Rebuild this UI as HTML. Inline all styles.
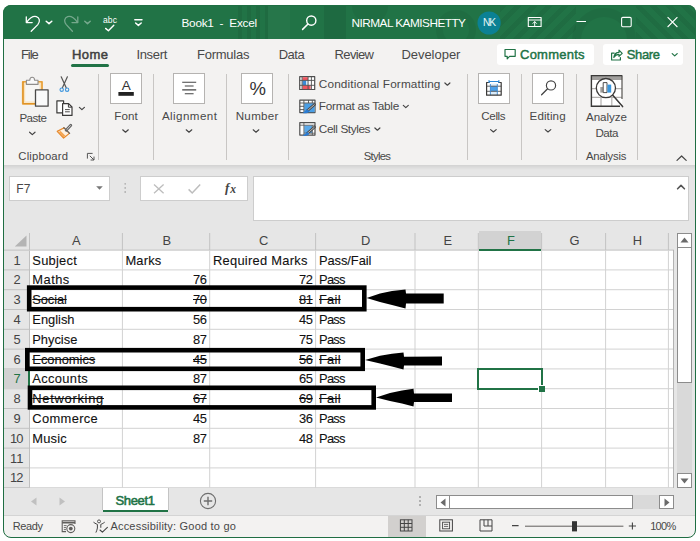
<!DOCTYPE html>
<html lang="en"><head><meta charset="utf-8"><title>Book1 - Excel</title>
<style>
html,body{margin:0;padding:0;background:#fff;}
body{width:700px;height:541px;overflow:hidden;position:relative;font-family:"Liberation Sans",sans-serif;}
#win{position:absolute;left:3px;top:5px;width:693px;height:533px;overflow:hidden;border-radius:8px;background:#f3f2f1;}
#pg{position:absolute;left:-3px;top:-5px;width:700px;height:541px;}
#frame{position:absolute;left:3px;top:5px;width:691px;height:531px;border:1px solid #1f6e43;border-radius:8px;pointer-events:none;}
.a{position:absolute;}
.t{position:absolute;white-space:pre;line-height:1;}
.sep{position:absolute;width:1px;background:#c8c6c4;top:74px;height:86px;}
.bx{position:absolute;background:#fff;border:1px solid #b5b3b1;box-sizing:border-box;}
.gl{position:absolute;background:#d4d4d4;}
svg{position:absolute;overflow:visible;}

</style></head><body>
<div id="win"><div id="pg">
<!-- title bar -->
<div class="a" style="left:3px;top:5px;width:693px;height:34px;background:#217346;"></div>
<!-- title bar subtle pattern -->
<div class="a" style="left:238px;top:5px;width:30px;height:34px;background:repeating-linear-gradient(90deg,rgba(0,0,0,0.07) 0 4px,rgba(0,0,0,0) 4px 9px);"></div>
<div class="a" style="left:268px;top:5px;width:22px;height:34px;background:rgba(255,255,255,0.025);"></div>
<div class="a" style="left:324px;top:5px;width:22px;height:34px;background:rgba(0,0,0,0.07);"></div>
<div class="a" style="left:352px;top:-12px;width:36px;height:36px;border-radius:50%;background:rgba(0,0,0,0.05);"></div>
<div class="a" style="left:436px;top:10px;width:40px;height:40px;border-radius:50%;border:7px solid rgba(0,0,0,0.05);box-sizing:border-box;"></div>
<div class="a" style="left:500px;top:5px;width:76px;height:34px;background:repeating-linear-gradient(135deg,rgba(0,0,0,0.06) 0 5px,rgba(0,0,0,0) 5px 11px);"></div>
<div class="a" style="left:572px;top:8px;width:64px;height:64px;border-radius:50%;border:9px solid rgba(0,0,0,0.055);box-sizing:border-box;"></div>
<div class="a" style="left:636px;top:5px;width:60px;height:34px;background:repeating-linear-gradient(45deg,rgba(0,0,0,0.06) 0 5px,rgba(0,0,0,0) 5px 11px);"></div>
<div class="a" style="left:3px;top:39px;width:693px;height:40px;background:#f3f2f1;"></div>
<!-- ribbon bg -->
<div class="a" style="left:3px;top:39px;width:693px;height:126px;background:#f3f2f1;"></div>
<div class="a" style="left:3px;top:165px;width:693px;height:5px;background:linear-gradient(#d2d2d2,#e6e6e6);"></div>
<!-- formula area -->
<div class="a" style="left:3px;top:170px;width:693px;height:61px;background:#e6e6e6;"></div>
<!-- home underline -->
<div class="a" style="left:71px;top:64px;width:38px;height:3px;background:#217346;border-radius:1.5px;"></div>
<!-- comments / share buttons -->
<div class="a" style="left:497px;top:44px;width:97px;height:21px;background:#fff;border-radius:3px;"></div>
<div class="a" style="left:603px;top:44px;width:80px;height:21px;background:#fff;border-radius:3px;"></div>
<!-- avatar -->
<svg style="left:470px;top:6px;" width="40" height="34" viewBox="470 6 40 34"><circle cx="489.1" cy="23" r="11.6" fill="#0b8194"/></svg>
<!-- ribbon separators -->
<div class="sep" style="left:98px;"></div>
<div class="sep" style="left:153px;"></div>
<div class="sep" style="left:226px;"></div>
<div class="sep" style="left:288px;"></div>
<div class="sep" style="left:467px;"></div>
<div class="sep" style="left:521px;"></div>
<div class="sep" style="left:576px;"></div>
<div class="sep" style="left:637px;"></div>
<!-- ribbon big boxes -->
<div class="bx" style="left:110px;top:73px;width:32px;height:31px;"></div>
<div class="bx" style="left:173px;top:73px;width:32px;height:31px;"></div>
<div class="bx" style="left:241px;top:73px;width:32px;height:31px;"></div>
<div class="bx" style="left:478px;top:73px;width:32px;height:31px;"></div>
<div class="bx" style="left:532px;top:73px;width:32px;height:31px;"></div>
<!-- formula bar boxes -->
<div class="bx" style="left:9px;top:176px;width:101px;height:25px;border-color:#cdcdcd;"></div>
<div class="bx" style="left:140px;top:176px;width:108px;height:25px;border-color:#cdcdcd;"></div>
<div class="bx" style="left:253px;top:176px;width:436px;height:45px;border-color:#cdcdcd;"></div>
<!-- grid area -->
<div class="a" style="left:4px;top:231px;width:671px;height:20px;background:#e6e6e6;"></div>
<div class="a" style="left:4px;top:250px;width:26px;height:238px;background:#e6e6e6;"></div>
<div class="a" style="left:30px;top:250px;width:645px;height:238px;background:#fff;"></div>
<!-- gridlines -->
<svg style="left:0;top:0;" width="700" height="541" viewBox="0 0 700 541" shape-rendering="geometricPrecision">
<rect x="29.0" y="233" width="1" height="17" fill="#c2c2c2"/>
<rect x="121.9" y="233" width="1" height="17" fill="#c2c2c2"/>
<rect x="209.2" y="233" width="1" height="17" fill="#c2c2c2"/>
<rect x="315.1" y="233" width="1" height="17" fill="#c2c2c2"/>
<rect x="414.5" y="233" width="1" height="17" fill="#c2c2c2"/>
<rect x="477.8" y="233" width="1" height="17" fill="#c2c2c2"/>
<rect x="541.1" y="233" width="1" height="17" fill="#c2c2c2"/>
<rect x="605.1" y="233" width="1" height="17" fill="#c2c2c2"/>
<rect x="667.9" y="233" width="1" height="17" fill="#c2c2c2"/>
<rect x="121.9" y="250.6" width="1" height="237.1" fill="#d2d2d2"/>
<rect x="209.2" y="250.6" width="1" height="237.1" fill="#d2d2d2"/>
<rect x="315.1" y="250.6" width="1" height="237.1" fill="#d2d2d2"/>
<rect x="414.5" y="250.6" width="1" height="237.1" fill="#d2d2d2"/>
<rect x="477.8" y="250.6" width="1" height="237.1" fill="#d2d2d2"/>
<rect x="541.1" y="250.6" width="1" height="237.1" fill="#d2d2d2"/>
<rect x="605.1" y="250.6" width="1" height="237.1" fill="#d2d2d2"/>
<rect x="667.9" y="250.6" width="1" height="237.1" fill="#d2d2d2"/>
<rect x="30" y="269.4" width="643" height="1" fill="#d2d2d2"/>
<rect x="4" y="269.4" width="26" height="1" fill="#c2c2c2"/>
<rect x="30" y="289.2" width="643" height="1" fill="#d2d2d2"/>
<rect x="4" y="289.2" width="26" height="1" fill="#c2c2c2"/>
<rect x="30" y="309.0" width="643" height="1" fill="#d2d2d2"/>
<rect x="4" y="309.0" width="26" height="1" fill="#c2c2c2"/>
<rect x="30" y="328.8" width="643" height="1" fill="#d2d2d2"/>
<rect x="4" y="328.8" width="26" height="1" fill="#c2c2c2"/>
<rect x="30" y="348.6" width="643" height="1" fill="#d2d2d2"/>
<rect x="4" y="348.6" width="26" height="1" fill="#c2c2c2"/>
<rect x="30" y="368.4" width="643" height="1" fill="#d2d2d2"/>
<rect x="4" y="368.4" width="26" height="1" fill="#c2c2c2"/>
<rect x="30" y="388.2" width="643" height="1" fill="#d2d2d2"/>
<rect x="4" y="388.2" width="26" height="1" fill="#c2c2c2"/>
<rect x="30" y="408.0" width="643" height="1" fill="#d2d2d2"/>
<rect x="4" y="408.0" width="26" height="1" fill="#c2c2c2"/>
<rect x="30" y="427.8" width="643" height="1" fill="#d2d2d2"/>
<rect x="4" y="427.8" width="26" height="1" fill="#c2c2c2"/>
<rect x="30" y="447.6" width="643" height="1" fill="#d2d2d2"/>
<rect x="4" y="447.6" width="26" height="1" fill="#c2c2c2"/>
<rect x="30" y="467.4" width="643" height="1" fill="#d2d2d2"/>
<rect x="4" y="467.4" width="26" height="1" fill="#c2c2c2"/>
<rect x="30" y="487.2" width="643" height="1" fill="#d2d2d2"/>
<rect x="4" y="487.2" width="26" height="1" fill="#c2c2c2"/>
<rect x="4" y="249.6" width="670" height="1" fill="#c0c0c0"/>
<rect x="29" y="250.6" width="1" height="237.1" fill="#c0c0c0"/>
</svg>
<!-- select-all triangle -->
<svg style="left:14px;top:235px;" width="13" height="12" viewBox="0 0 13 12"><path d="M12.5 0.5V11.5H0.8Z" fill="#b4b4b4"/></svg>
<!-- selected header overlays (redrawn over gridlines) -->
<div class="a" style="left:479px;top:231px;width:62px;height:20px;background:#d2d2d2;border-bottom:2px solid #217346;box-sizing:border-box;"></div>
<div class="a" style="left:4px;top:369px;width:26px;height:20px;background:#d2d2d2;border-right:2px solid #217346;box-sizing:border-box;"></div>
<!-- selection F7 -->
<div class="a" style="left:477px;top:368px;width:66px;height:22px;border:2px solid #217346;box-sizing:border-box;"></div>
<div class="a" style="left:538px;top:385px;width:7px;height:7px;background:#217346;border:1px solid #fff;border-right:0;border-bottom:0;box-sizing:border-box;"></div>
<!-- black annotation boxes + arrows -->
<svg style="left:0;top:0;" width="700" height="541" viewBox="0 0 700 541">
 <g fill="none" stroke="#000" stroke-width="4.6">
  <rect x="29.2" y="287.6" width="335.1" height="21.6"/>
  <rect x="27.3" y="350.2" width="335.4" height="18.6"/>
  <rect x="30" y="387.8" width="343.7" height="19.6"/>
 </g>
 <g fill="#000">
  <path d="M366.6 298 L380 293.5 L392 291 L405.5 289.4 L406 293.6 L443.7 293.4 L443.7 303.4 L406 303.6 L405.5 308.6 L392 305 L380 302 Z"/>
  <path d="M365 360 L380 355.8 L392 353.8 L403.5 352.4 L404 356.8 L442 356.6 L442 365.4 L404 365.4 L403.5 369.6 L392 366.4 L380 363.6 Z"/>
  <path d="M376 397.4 L390 393 L402 390.6 L413.5 388.8 L414 393.4 L452 393.4 L452 402 L414 402 L413.5 406.4 L402 403.4 L390 401 Z"/>
 </g>
</svg>
<!-- vertical scrollbar -->
<div class="a" style="left:674px;top:231px;width:21px;height:257px;background:#e6e6e6;"></div>
<div class="a" style="left:673px;top:250px;width:1px;height:238px;background:#b4b4b4;"></div>
<div class="a" style="left:675px;top:231px;width:20px;height:257px;background:#e6e6e6;"></div>
<div class="a" style="left:677px;top:248px;width:15px;height:226px;background:#d9d9d9;"></div>
<div class="bx" style="left:677px;top:233px;width:15px;height:15px;border-color:#8c8c8c;"></div>
<svg style="left:680px;top:237px;" width="9" height="6" viewBox="0 0 9 6"><path d="M4.5 0.5L8.5 5.5H0.5Z" fill="#6a6a6a"/></svg>
<div class="bx" style="left:677px;top:247px;width:15px;height:136px;border-color:#8c8c8c;"></div>
<div class="bx" style="left:677px;top:473px;width:15px;height:15px;border-color:#8c8c8c;"></div>
<svg style="left:680px;top:478px;" width="9" height="6" viewBox="0 0 9 6"><path d="M4.5 5.5L8.5 0.5H0.5Z" fill="#6a6a6a"/></svg>
<!-- sheet tab bar -->
<div class="a" style="left:4px;top:488px;width:691px;height:27px;background:#e6e6e6;"></div>
<div class="a" style="left:103px;top:488px;width:65px;height:24px;background:#fff;border-bottom:2px solid #217346;box-sizing:border-box;"></div>
<div class="a" style="left:102px;top:488px;width:1px;height:22px;background:#c4c4c4;"></div>
<div class="a" style="left:168px;top:488px;width:1px;height:22px;background:#c4c4c4;"></div>
<svg style="left:30px;top:497px;" width="8" height="9" viewBox="0 0 8 9"><path d="M6.5 0.5V8.5L1 4.5Z" fill="#c0c0c0"/></svg>
<svg style="left:58px;top:497px;" width="8" height="9" viewBox="0 0 8 9"><path d="M1.5 0.5V8.5L7 4.5Z" fill="#c0c0c0"/></svg>
<svg style="left:199px;top:492px;" width="18" height="18" viewBox="0 0 18 18"><circle cx="9" cy="9" r="7.6" fill="none" stroke="#6e6e6e" stroke-width="1.1"/><path d="M9 4.8V13.2M4.8 9H13.2" stroke="#6e6e6e" stroke-width="1.4" fill="none"/></svg>
<!-- hscroll -->
<div class="a" style="left:419px;top:496px;width:2px;height:2px;background:#b0b0b0;box-shadow:0 4px 0 #b0b0b0,0 8px 0 #b0b0b0;"></div>
<div class="a" style="left:450px;top:495px;width:209px;height:14px;background:#d9d9d9;"></div>
<div class="bx" style="left:436px;top:495px;width:14px;height:14px;border-color:#8c8c8c;"></div>
<svg style="left:440px;top:498px;" width="6" height="9" viewBox="0 0 6 9"><path d="M0.5 4.5L5.5 0.5V8.5Z" fill="#6a6a6a"/></svg>
<div class="bx" style="left:449px;top:495px;width:184px;height:14px;border-color:#8c8c8c;"></div>
<div class="bx" style="left:659px;top:495px;width:15px;height:14px;border-color:#8c8c8c;"></div>
<svg style="left:664px;top:498px;" width="6" height="9" viewBox="0 0 6 9"><path d="M5.5 4.5L0.5 0.5V8.5Z" fill="#6a6a6a"/></svg>
<!-- status bar -->
<div class="a" style="left:4px;top:515px;width:691px;height:23px;background:#f3f2f1;"></div>
<div class="a" style="left:4px;top:515px;width:691px;height:1px;background:#d4d4d4;"></div>
<div class="a" style="left:388px;top:516px;width:38px;height:21px;background:#d2d0ce;"></div>
<!-- ===== title bar icons ===== -->
<svg style="left:0;top:0;" width="700" height="40" viewBox="0 0 700 40" fill="none" stroke="#fff" stroke-width="1.3" stroke-linecap="round" stroke-linejoin="round">
 <!-- undo -->
 <path d="M26.3 16.8V22.6H32.2"/>
 <path d="M26.6 22.3C28.8 18.6 32.8 15.6 36.4 16.6C39.8 17.8 40.4 21.6 37.8 24.6L31.2 31.3"/>
 <path d="M46.2 21.2L49 23.6L51.8 21.2" stroke-width="1.5"/>
 <!-- redo (disabled) -->
 <g opacity="0.38">
 <path d="M77.8 16.8V22.6H72"/>
 <path d="M77.5 22.3C75.3 18.6 71.3 15.6 67.7 16.6C64.3 17.8 63.7 21.6 66.3 24.6L72.4 31.3"/>
 <path d="M84.8 21.2L87.5 23.6L90.2 21.2" stroke-width="1.5"/>
 </g>
 <!-- spell check mark -->
 <path d="M105.6 28.4L108.4 30.8L113.8 25.2" stroke-width="1.4"/>
 <!-- customize QAT -->
 <path d="M134.8 19.8H142" stroke-width="1.4"/>
 <path d="M135.6 23L138.4 25.4L141.2 23" stroke-width="1.5"/>
 <!-- search -->
 <circle cx="311.3" cy="20.6" r="4.6" stroke-width="1.4"/>
 <path d="M308 24L302.6 29.4" stroke-width="1.5"/>
 <!-- ribbon display options -->
 <rect x="528.3" y="17.5" width="12.8" height="9" stroke-width="1.1"/>
 <path d="M528.3 20H541.1" stroke-width="1"/>
 <path d="M534.7 25.6V21.8M532.9 23.4L534.7 21.6L536.5 23.4" stroke-width="1"/>
 <!-- minimize -->
 <path d="M576.5 21.5H586" stroke-width="1.1" stroke-linecap="butt"/>
 <!-- maximize -->
 <rect x="621.6" y="17.4" width="9.6" height="9.4" rx="1.2" stroke-width="1.1"/>
 <!-- close -->
 <path d="M667.6 17.2L677.4 27M677.4 17.2L667.6 27" stroke-width="1.1" stroke-linecap="butt"/>
</svg>
<!-- ===== tab row icons ===== -->
<svg style="left:0;top:40px;" width="700" height="30" viewBox="0 40 700 30" fill="none" stroke="#217346" stroke-width="1.2" stroke-linejoin="round" stroke-linecap="round">
 <!-- comment bubble -->
 <path d="M505 49.5H515.2V56.3H509.6L507.2 58.8V56.3H505Z"/>
 <!-- share -->
 <path d="M614.2 53.2H611.6V60H620.4V57.6"/>
 <path d="M613.8 57.4C614.4 54.2 616.4 52.4 619 52.4V50.2L622.2 53.4L619 56.4V54.4C616.8 54.4 615 55.4 613.8 57.4Z"/>
 <path d="M672.2 53.6L674.7 55.9L677.2 53.6" stroke-width="1.25"/>
</svg>
<!-- ===== ribbon icons ===== -->
<svg style="left:0;top:70px;" width="700" height="96" viewBox="0 70 700 96" fill="none" stroke-linejoin="round">
 <!-- paste: clipboard -->
 <rect x="22.8" y="81.8" width="19.2" height="22" fill="#f7f6f4" stroke="#e9a23b" stroke-width="1.8"/>
 <rect x="24.5" y="83.5" width="15.8" height="18.6" fill="none" stroke="#fbe2b8" stroke-width="1.4"/>
 <path d="M23.2 81.8V103.6H36" stroke="#dc8f22" stroke-width="0.9"/>
 <path d="M26.4 84.4V80.2H29.8C29.8 76.2 34.6 76.2 34.6 80.2H38V84.4Z" fill="#f9f9f9" stroke="#8f8d8b" stroke-width="1.1"/>
 <rect x="35.5" y="89.8" width="12.6" height="16.4" fill="#fafafa" stroke="#4a4948" stroke-width="1.3"/>
 <!-- paste chevron -->
 <path d="M29.6 132.2L32.3 134.6L35 132.2" stroke="#444" stroke-width="1.2" stroke-linecap="round"/>
 <!-- scissors -->
 <path d="M61.2 76.8L66.2 87.8M67.4 76.8L62.4 87.8" stroke="#555" stroke-width="1.2" stroke-linecap="round"/>
 <circle cx="61.7" cy="89.7" r="1.7" stroke="#3f97df" stroke-width="1.1"/>
 <circle cx="67.1" cy="89.7" r="1.7" stroke="#3f97df" stroke-width="1.1"/>
 <!-- copy -->
 <path d="M62 112.9H56.9V100.8H63.6V103" stroke="#3b3a39" stroke-width="1.2" fill="#fff"/>
 <path d="M62.6 103.6H68.6L72 107V115.4H62.6Z" fill="#fff" stroke="#3b3a39" stroke-width="1.2"/>
 <path d="M68.4 103.8V107.2H71.8" stroke="#3b3a39" stroke-width="1"/>
 <path d="M65 109.6H69.8M65 111.8H69.8" stroke="#3b3a39" stroke-width="0.9"/>
 <path d="M79.4 107.4L81.9 109.6L84.4 107.4" stroke="#444" stroke-width="1.2" stroke-linecap="round"/>
 <!-- format painter -->
 <path d="M57.2 131.4L64.2 127.8L69.4 133.4L63.6 138Z" fill="#fdf1e2" stroke="#e8892a" stroke-width="1.2"/>
 <path d="M58.6 132L63.6 137.2L65.4 135.8L60.6 131Z" fill="#f3a451" stroke="none"/>
 <path d="M66.2 130.2L70.8 125.2" stroke="#666" stroke-width="2.8" stroke-linecap="round"/>
 <path d="M66.6 129.8L70.4 125.6" stroke="#ddd" stroke-width="0.9" stroke-linecap="round"/>
 <path d="M63.8 127.6L69.6 133.4" stroke="#666" stroke-width="1.3" stroke-linecap="round"/>
 <!-- dialog launcher -->
 <path d="M87.4 158.6V153.4H92.6" stroke="#555" stroke-width="1"/>
 <path d="M89.8 155.8L94 160M94 156.6V160H90.6" stroke="#555" stroke-width="1"/>
 <!-- font: black bar -->
 <rect x="118.4" y="92" width="15.4" height="3.8" fill="#222"/>
 <path d="M122.7 129.8L125.5 132.2L128.3 129.8" stroke="#444" stroke-width="1.2" stroke-linecap="round"/>
 <!-- alignment lines -->
 <path d="M182.2 82.2H196.2M184.8 86H193.6M182.2 89.9H196.2M184.8 93.7H193.6" stroke="#444" stroke-width="1.1"/>
 <path d="M186.2 129.8L189 132.2L191.8 129.8" stroke="#444" stroke-width="1.2" stroke-linecap="round"/>
 <!-- number chevron -->
 <path d="M253.2 129.8L256 132.2L258.8 129.8" stroke="#444" stroke-width="1.2" stroke-linecap="round"/>
 <!-- conditional formatting icon -->
 <g>
  <rect x="299.7" y="76.7" width="15" height="12.8" fill="#fff" stroke="#4f4f4f" stroke-width="1.2"/>
  <rect x="302.4" y="77.2" width="5.6" height="3.2" fill="#f05660"/>
  <rect x="302.4" y="80.6" width="3.8" height="4.6" fill="#3a8ad6"/>
  <rect x="306.2" y="80.6" width="1.8" height="4.6" fill="#cfe6f7"/>
  <rect x="302.4" y="85.4" width="8.2" height="3.7" fill="#f05660"/>
  <path d="M302.1 76.7V89.5M308.1 76.7V89.5M311.4 76.7V89.5M299.7 80.4H314.7M299.7 85.3H314.7" stroke="#4f4f4f" stroke-width="0.9"/>
 </g>
 <!-- format as table icon -->
 <g>
  <rect x="299.8" y="100.2" width="15.2" height="12.4" fill="#fff" stroke="#4f4f4f" stroke-width="1.2"/>
  <rect x="304.2" y="103.2" width="10.4" height="9" fill="#4a9fe6"/>
  <path d="M303.9 100.2V112.6M308.5 100.2V103M312.3 100.2V103M299.8 103H315M299.8 106.3H304M299.8 109.6H304" stroke="#4f4f4f" stroke-width="0.9"/>
  <path d="M314.6 104.4L307.2 110.8" stroke="#4a4a4a" stroke-width="2.6" stroke-linecap="round"/>
  <path d="M314.2 104.8L308.4 109.8" stroke="#d8d8d8" stroke-width="0.8" stroke-linecap="round"/>
  <path d="M307.8 109.6C306 109.4 305.4 111.4 302.6 113C305.6 113.8 308.6 113 309.2 111.2Z" fill="#2b7cd3"/>
 </g>
 <!-- cell styles icon -->
 <g>
  <rect x="299.8" y="122.7" width="15.2" height="12.4" fill="#fff" stroke="#4f4f4f" stroke-width="1.2"/>
  <rect x="304.2" y="125.4" width="8" height="7.6" fill="#5aa9ea"/>
  <path d="M303.9 122.7V135.1M299.8 125.2H315M312.3 125.2V135.1M303.9 133.2H315" stroke="#4f4f4f" stroke-width="0.8"/>
  <path d="M314.6 127L307.2 133.4" stroke="#4a4a4a" stroke-width="2.6" stroke-linecap="round"/>
  <path d="M314.2 127.4L308.4 132.4" stroke="#d8d8d8" stroke-width="0.8" stroke-linecap="round"/>
  <path d="M307.8 132.2C306 132 305.4 134 302.6 135.6C305.6 136.4 308.6 135.6 309.2 133.8Z" fill="#2b7cd3"/>
 </g>
 <path d="M444.9 83L447.4 85.2L449.9 83M403.3 105.4L405.8 107.6L408.3 105.4M374.9 128L377.4 130.2L379.9 128" stroke="#444" stroke-width="1.2" stroke-linecap="round"/>
 <!-- cells icon -->
 <g>
  <rect x="486.6" y="82.6" width="14.6" height="12.6" fill="#fff"/>
  <rect x="490.4" y="83.6" width="6.9" height="11.6" fill="#d9ecfb"/>
  <rect x="490.4" y="86.2" width="6.9" height="5.1" fill="#4aa0ea"/>
  <path d="M486.6 86.2H501.2M486.6 91.3H501.2" stroke="#555" stroke-width="0.9"/>
  <path d="M490.4 84V95.2M497.3 84V95.2" stroke="#3a86cf" stroke-width="0.9"/>
  <path d="M489.6 82.5H486.6V95.2H501.2V82.5H498.2" stroke="#3b3a39" stroke-width="1.2"/>
  <path d="M489 80V83M498.9 80V83M489 81.5H498.9" stroke="#2b88d8" stroke-width="1"/>
 </g>
 <path d="M490.6 129.6L493.4 132L496.2 129.6" stroke="#444" stroke-width="1.2" stroke-linecap="round"/>
 <!-- editing magnifier -->
 <circle cx="551" cy="85.4" r="4.6" stroke="#444" stroke-width="1.2"/>
 <path d="M547.6 88.8L541.6 94.8" stroke="#444" stroke-width="1.3" stroke-linecap="round"/>
 <path d="M545.2 129.6L548 132L550.8 129.6" stroke="#444" stroke-width="1.2" stroke-linecap="round"/>
 <!-- analyze data -->
 <g>
  <rect x="591.4" y="75.6" width="30.8" height="30.6" fill="#fff" stroke="none"/>
  <rect x="591.4" y="75.6" width="30.8" height="4.4" fill="#a19f9d"/>
  <path d="M601 80V106M611.8 80V106M591.4 88.6H622M591.4 97.4H622" stroke="#b3b1af" stroke-width="1.2"/>
  <path d="M622 75.6V99" stroke="#55534f" stroke-width="1.2"/>
  <path d="M622.2 75.6H591.4V106.2H620" stroke="#3b3a39" stroke-width="1.4" stroke-linejoin="miter"/>
  <circle cx="605.9" cy="88.1" r="9.6" fill="#fff" stroke="#3b3a39" stroke-width="1.3"/>
  <rect x="600.3" y="87" width="2.6" height="5.6" fill="#a19f9d"/>
  <rect x="603.2" y="82.6" width="3.8" height="10" fill="#fff" stroke="#3b3a39" stroke-width="0.9"/>
  <rect x="607.4" y="84.6" width="3.8" height="8" fill="#3a96dd"/>
  <path d="M612.8 95.2L622.6 106.6" stroke="#3b3a39" stroke-width="1.5" stroke-linecap="round"/>
 </g>
 <!-- collapse ribbon -->
 <path d="M677 160.4L681.6 156L686.2 160.4" stroke="#444" stroke-width="1.2" stroke-linecap="round"/>
</svg>
<!-- ===== formula bar icons ===== -->
<svg style="left:0;top:170px;" width="700" height="60" viewBox="0 170 700 60" fill="none">
 <path d="M96.2 186.2H102.8L99.5 189.8Z" fill="#777"/>
 <circle cx="125.2" cy="183.8" r="0.9" fill="#b0b0b0"/><circle cx="125.2" cy="187.9" r="0.9" fill="#b0b0b0"/><circle cx="125.2" cy="192" r="0.9" fill="#b0b0b0"/>
 <path d="M154 184.4L163.6 193.2M163.6 184.4L154 193.2" stroke="#bdbdbd" stroke-width="1.3"/>
 <path d="M188.6 189.4L192.2 193L200.2 184.4" stroke="#bdbdbd" stroke-width="1.5"/>
 <path d="M677.6 188.8L681 185.4L684.4 188.8" stroke="#555" stroke-width="1.6" stroke-linecap="round" stroke-linejoin="round"/>
</svg>
<!-- ===== status bar icons ===== -->
<svg style="left:0;top:514px;" width="700" height="24" viewBox="0 514 700 24" fill="none">
 <!-- macro record -->
 <path d="M66 531.6H62.2V520.8H75V524" stroke="#605e5c" stroke-width="1.1"/>
 <path d="M62.2 522.6H75" stroke="#605e5c" stroke-width="1.6"/>
 <path d="M63.8 525.6H66.6M63.8 527.6H66M63.8 529.6H66" stroke="#605e5c" stroke-width="0.9"/>
 <circle cx="70.8" cy="528.6" r="4" stroke="#605e5c" stroke-width="1.1"/>
 <circle cx="70.8" cy="528.6" r="1.9" fill="#605e5c"/>
 <!-- accessibility -->
 <circle cx="99" cy="521.4" r="1.5" stroke="#444" stroke-width="0.9"/>
 <path d="M93.8 522.4C95.6 523.8 97 524.2 97.4 524.4V528C97.4 529.8 96.4 530.6 96 532.2M104.4 522.4C102.6 523.8 101.2 524.2 100.8 524.4V527.4" stroke="#444" stroke-width="1" stroke-linecap="round" stroke-linejoin="round"/>
 <path d="M100 530L102.4 532.2L107.4 527.4" stroke="#444" stroke-width="1.1" stroke-linecap="round" stroke-linejoin="round"/>
 <!-- view buttons -->
 <rect x="400.4" y="519.8" width="11.6" height="11.2" stroke="#444" stroke-width="1"/>
 <path d="M404.3 519.8V531M408.2 519.8V531M400.4 523.5H412M400.4 527.3H412" stroke="#444" stroke-width="1"/>
 <rect x="439.8" y="519.8" width="12.6" height="11.2" stroke="#444" stroke-width="1"/>
 <rect x="442.6" y="522.2" width="7" height="6.6" stroke="#444" stroke-width="0.9"/>
 <path d="M444 524.4H448.2M444 526.4H448.2" stroke="#444" stroke-width="0.8"/>
 <path d="M480 519.8H492V531H480Z" stroke="#444" stroke-width="1"/>
 <path d="M484 519.8V526H492M488 519.8V526" stroke="#444" stroke-width="1"/>
 <!-- zoom slider -->
 <path d="M512 525.6H518.6" stroke="#444" stroke-width="1.1"/>
 <path d="M525 526.2H623.4" stroke="#605e5c" stroke-width="1"/>
 <rect x="572" y="521.2" width="5" height="10.2" fill="#333"/>
 <path d="M628.8 526H636M632.4 522.4V529.6" stroke="#444" stroke-width="1.1"/>
</svg>

<span class="t" style="left:181.5px;top:17.81px;font-size:11.8px;color:#fff;letter-spacing:-0.27px;">Book1  -  Excel</span>
<span class="t" style="left:351.5px;top:17.81px;font-size:11.8px;color:#fff;letter-spacing:-0.52px;">NIRMAL KAMISHETTY</span>
<span class="t" style="left:482.9px;top:18.07px;font-size:10.2px;color:#e4f6f6;letter-spacing:-0.96px;">NK</span>
<span class="t" style="left:21.0px;top:48.00px;font-size:13px;color:#484848;letter-spacing:-1.08px;">File</span>
<span class="t" style="left:72.0px;top:48.00px;font-size:13px;color:#404040;letter-spacing:0.44px;-webkit-text-stroke:0.5px #404040;">Home</span>
<span class="t" style="left:136.4px;top:48.00px;font-size:13px;color:#484848;letter-spacing:-0.32px;">Insert</span>
<span class="t" style="left:197.0px;top:48.00px;font-size:13px;color:#484848;letter-spacing:-0.24px;">Formulas</span>
<span class="t" style="left:278.7px;top:48.00px;font-size:13px;color:#484848;letter-spacing:-0.49px;">Data</span>
<span class="t" style="left:334.6px;top:48.00px;font-size:13px;color:#484848;letter-spacing:-0.65px;">Review</span>
<span class="t" style="left:401.4px;top:48.00px;font-size:13px;color:#484848;letter-spacing:-0.03px;">Developer</span>
<span class="t" style="left:520.0px;top:48.00px;font-size:13px;color:#217346;letter-spacing:0.25px;-webkit-text-stroke:0.45px #217346;">Comments</span>
<span class="t" style="left:626.8px;top:48.00px;font-size:13px;color:#217346;letter-spacing:-0.38px;-webkit-text-stroke:0.45px #217346;">Share</span>
<span class="t" style="left:19.4px;top:111.78px;font-size:11.6px;color:#484848;letter-spacing:-0.54px;">Paste</span>
<span class="t" style="left:18.3px;top:150.73px;font-size:11.3px;color:#484848;letter-spacing:0.17px;">Clipboard</span>
<span class="t" style="left:114.3px;top:110.18px;font-size:11.6px;color:#484848;letter-spacing:0.1px;">Font</span>
<span class="t" style="left:161.9px;top:110.18px;font-size:11.6px;color:#484848;letter-spacing:0.44px;">Alignment</span>
<span class="t" style="left:235.7px;top:110.18px;font-size:11.6px;color:#484848;letter-spacing:0.31px;">Number</span>
<span class="t" style="left:318.8px;top:78.51px;font-size:11.8px;color:#484848;letter-spacing:0.14px;">Conditional Formatting</span>
<span class="t" style="left:318.8px;top:101.01px;font-size:11.8px;color:#484848;letter-spacing:-0.28px;">Format as Table</span>
<span class="t" style="left:318.8px;top:123.91px;font-size:11.8px;color:#484848;letter-spacing:-0.4px;">Cell Styles</span>
<span class="t" style="left:363.8px;top:150.73px;font-size:11.3px;color:#484848;letter-spacing:-0.71px;">Styles</span>
<span class="t" style="left:481.3px;top:110.18px;font-size:11.6px;color:#484848;letter-spacing:-0.37px;">Cells</span>
<span class="t" style="left:529.6px;top:110.18px;font-size:11.6px;color:#484848;letter-spacing:0.09px;">Editing</span>
<span class="t" style="left:586.0px;top:111.18px;font-size:11.6px;color:#484848;letter-spacing:-0.04px;">Analyze</span>
<span class="t" style="left:595.4px;top:126.58px;font-size:11.6px;color:#484848;letter-spacing:-0.5px;">Data</span>
<span class="t" style="left:586.0px;top:150.73px;font-size:11.3px;color:#484848;letter-spacing:-0.25px;">Analysis</span>
<span class="t" style="left:121.7px;top:79.17px;font-size:13.5px;color:#333;">A</span>
<span class="t" style="left:249.5px;top:79.94px;font-size:18.5px;color:#333;">%</span>
<span class="t" style="left:16.3px;top:182.64px;font-size:12px;color:#484848;letter-spacing:0.18px;">F7</span>
<span class="t" style="left:225.0px;top:180.51px;font-size:13px;font-weight:700;color:#444;font-family:'Liberation Serif',serif;font-style:italic;">f</span>
<span class="t" style="left:230.2px;top:183.57px;font-size:11.5px;font-weight:700;color:#444;font-family:'Liberation Serif',serif;font-style:italic;">x</span>
<span class="t" style="left:103.1px;top:16.00px;font-size:8.5px;color:#fff;letter-spacing:0.04px;">abc</span>
<span class="t" style="left:115.5px;top:494.00px;font-size:13px;color:#217346;letter-spacing:-0.34px;-webkit-text-stroke:0.55px #217346;">Sheet1</span>
<span class="t" style="left:12.7px;top:520.99px;font-size:11px;color:#484848;letter-spacing:-0.4px;">Ready</span>
<span class="t" style="left:110.4px;top:520.99px;font-size:11px;color:#484848;letter-spacing:0.21px;">Accessibility: Good to go</span>
<span class="t" style="left:650.2px;top:520.99px;font-size:11px;color:#484848;letter-spacing:-0.71px;">100%</span>
<span class="t" style="left:72.0px;top:234.58px;font-size:12.9px;color:#444;">A</span>
<span class="t" style="left:162.6px;top:234.58px;font-size:12.9px;color:#444;">B</span>
<span class="t" style="left:258.9px;top:234.58px;font-size:12.9px;color:#444;">C</span>
<span class="t" style="left:361.1px;top:234.58px;font-size:12.9px;color:#444;">D</span>
<span class="t" style="left:443.4px;top:234.58px;font-size:12.9px;color:#444;">E</span>
<span class="t" style="left:507.0px;top:234.58px;font-size:12.9px;color:#217346;">F</span>
<span class="t" style="left:569.4px;top:234.58px;font-size:12.9px;color:#444;">G</span>
<span class="t" style="left:632.8px;top:234.58px;font-size:12.9px;color:#444;">H</span>
<span class="t" style="left:13.5px;top:254.68px;font-size:12.9px;color:#444;">1</span>
<span class="t" style="left:13.5px;top:274.48px;font-size:12.9px;color:#444;">2</span>
<span class="t" style="left:13.5px;top:294.28px;font-size:12.9px;color:#444;">3</span>
<span class="t" style="left:13.5px;top:314.08px;font-size:12.9px;color:#444;">4</span>
<span class="t" style="left:13.5px;top:333.88px;font-size:12.9px;color:#444;">5</span>
<span class="t" style="left:13.5px;top:353.68px;font-size:12.9px;color:#444;">6</span>
<span class="t" style="left:13.5px;top:373.48px;font-size:12.9px;color:#217346;">7</span>
<span class="t" style="left:13.5px;top:393.28px;font-size:12.9px;color:#444;">8</span>
<span class="t" style="left:13.5px;top:413.08px;font-size:12.9px;color:#444;">9</span>
<span class="t" style="left:10.0px;top:432.88px;font-size:12.9px;color:#444;letter-spacing:-0.94px;">10</span>
<span class="t" style="left:10.0px;top:452.68px;font-size:12.9px;color:#444;letter-spacing:0.01px;">11</span>
<span class="t" style="left:10.0px;top:472.48px;font-size:12.9px;color:#444;letter-spacing:-0.94px;">12</span>
<span class="t" style="left:32.3px;top:254.68px;font-size:12.9px;color:#111;letter-spacing:0.25px;-webkit-text-stroke:0.1px #111;">Subject</span>
<span class="t" style="left:125.4px;top:254.68px;font-size:12.9px;color:#111;letter-spacing:0.18px;-webkit-text-stroke:0.1px #111;">Marks</span>
<span class="t" style="left:213.0px;top:254.68px;font-size:12.9px;color:#111;letter-spacing:0.26px;-webkit-text-stroke:0.1px #111;">Required Marks</span>
<span class="t" style="left:319.0px;top:254.68px;font-size:12.9px;color:#111;letter-spacing:-0.08px;-webkit-text-stroke:0.1px #111;">Pass/Fail</span>
<span class="t" style="left:32.3px;top:274.48px;font-size:12.9px;color:#111;letter-spacing:0.47px;-webkit-text-stroke:0.1px #111;">Maths</span>
<span class="t" style="left:193.0px;top:274.48px;font-size:12.9px;color:#111;letter-spacing:-0.34px;-webkit-text-stroke:0.1px #111;">76</span>
<span class="t" style="left:299.0px;top:274.48px;font-size:12.9px;color:#111;letter-spacing:-0.34px;-webkit-text-stroke:0.1px #111;">72</span>
<span class="t" style="left:319.0px;top:274.48px;font-size:12.9px;color:#111;letter-spacing:-0.72px;-webkit-text-stroke:0.1px #111;">Pass</span>
<span class="t" style="left:32.3px;top:294.28px;font-size:12.9px;color:#111;letter-spacing:-0.12px;text-decoration:line-through;-webkit-text-stroke:0.1px #111;">Social</span>
<span class="t" style="left:193.0px;top:294.28px;font-size:12.9px;color:#111;letter-spacing:-0.34px;text-decoration:line-through;-webkit-text-stroke:0.1px #111;">70</span>
<span class="t" style="left:299.0px;top:294.28px;font-size:12.9px;color:#111;letter-spacing:-0.34px;text-decoration:line-through;-webkit-text-stroke:0.1px #111;">81</span>
<span class="t" style="left:319.0px;top:294.28px;font-size:12.9px;color:#111;letter-spacing:0.24px;text-decoration:line-through;-webkit-text-stroke:0.1px #111;">Fail</span>
<span class="t" style="left:32.3px;top:314.08px;font-size:12.9px;color:#111;letter-spacing:-0.01px;-webkit-text-stroke:0.1px #111;">English</span>
<span class="t" style="left:193.0px;top:314.08px;font-size:12.9px;color:#111;letter-spacing:-0.34px;-webkit-text-stroke:0.1px #111;">56</span>
<span class="t" style="left:299.0px;top:314.08px;font-size:12.9px;color:#111;letter-spacing:-0.34px;-webkit-text-stroke:0.1px #111;">45</span>
<span class="t" style="left:319.0px;top:314.08px;font-size:12.9px;color:#111;letter-spacing:-0.72px;-webkit-text-stroke:0.1px #111;">Pass</span>
<span class="t" style="left:32.3px;top:333.88px;font-size:12.9px;color:#111;letter-spacing:-0.02px;-webkit-text-stroke:0.1px #111;">Phycise</span>
<span class="t" style="left:193.0px;top:333.88px;font-size:12.9px;color:#111;letter-spacing:-0.34px;-webkit-text-stroke:0.1px #111;">87</span>
<span class="t" style="left:299.0px;top:333.88px;font-size:12.9px;color:#111;letter-spacing:-0.34px;-webkit-text-stroke:0.1px #111;">75</span>
<span class="t" style="left:319.0px;top:333.88px;font-size:12.9px;color:#111;letter-spacing:-0.72px;-webkit-text-stroke:0.1px #111;">Pass</span>
<span class="t" style="left:32.3px;top:353.68px;font-size:12.9px;color:#111;letter-spacing:-0.01px;text-decoration:line-through;-webkit-text-stroke:0.1px #111;">Economics</span>
<span class="t" style="left:193.0px;top:353.68px;font-size:12.9px;color:#111;letter-spacing:-0.34px;text-decoration:line-through;-webkit-text-stroke:0.1px #111;">45</span>
<span class="t" style="left:299.0px;top:353.68px;font-size:12.9px;color:#111;letter-spacing:-0.34px;text-decoration:line-through;-webkit-text-stroke:0.1px #111;">56</span>
<span class="t" style="left:319.0px;top:353.68px;font-size:12.9px;color:#111;letter-spacing:0.24px;text-decoration:line-through;-webkit-text-stroke:0.1px #111;">Fail</span>
<span class="t" style="left:32.3px;top:373.48px;font-size:12.9px;color:#111;letter-spacing:0.35px;-webkit-text-stroke:0.1px #111;">Accounts</span>
<span class="t" style="left:193.0px;top:373.48px;font-size:12.9px;color:#111;letter-spacing:-0.34px;-webkit-text-stroke:0.1px #111;">87</span>
<span class="t" style="left:299.0px;top:373.48px;font-size:12.9px;color:#111;letter-spacing:-0.34px;-webkit-text-stroke:0.1px #111;">65</span>
<span class="t" style="left:319.0px;top:373.48px;font-size:12.9px;color:#111;letter-spacing:-0.72px;-webkit-text-stroke:0.1px #111;">Pass</span>
<span class="t" style="left:32.3px;top:393.28px;font-size:12.9px;color:#111;letter-spacing:0.72px;text-decoration:line-through;-webkit-text-stroke:0.1px #111;">Networking</span>
<span class="t" style="left:193.0px;top:393.28px;font-size:12.9px;color:#111;letter-spacing:-0.34px;text-decoration:line-through;-webkit-text-stroke:0.1px #111;">67</span>
<span class="t" style="left:299.0px;top:393.28px;font-size:12.9px;color:#111;letter-spacing:-0.34px;text-decoration:line-through;-webkit-text-stroke:0.1px #111;">69</span>
<span class="t" style="left:319.0px;top:393.28px;font-size:12.9px;color:#111;letter-spacing:0.24px;text-decoration:line-through;-webkit-text-stroke:0.1px #111;">Fail</span>
<span class="t" style="left:32.3px;top:413.08px;font-size:12.9px;color:#111;letter-spacing:0.35px;-webkit-text-stroke:0.1px #111;">Commerce</span>
<span class="t" style="left:193.0px;top:413.08px;font-size:12.9px;color:#111;letter-spacing:-0.34px;-webkit-text-stroke:0.1px #111;">45</span>
<span class="t" style="left:299.0px;top:413.08px;font-size:12.9px;color:#111;letter-spacing:-0.34px;-webkit-text-stroke:0.1px #111;">36</span>
<span class="t" style="left:319.0px;top:413.08px;font-size:12.9px;color:#111;letter-spacing:-0.72px;-webkit-text-stroke:0.1px #111;">Pass</span>
<span class="t" style="left:32.3px;top:432.88px;font-size:12.9px;color:#111;letter-spacing:0.21px;-webkit-text-stroke:0.1px #111;">Music</span>
<span class="t" style="left:193.0px;top:432.88px;font-size:12.9px;color:#111;letter-spacing:-0.34px;-webkit-text-stroke:0.1px #111;">87</span>
<span class="t" style="left:299.0px;top:432.88px;font-size:12.9px;color:#111;letter-spacing:-0.34px;-webkit-text-stroke:0.1px #111;">48</span>
<span class="t" style="left:319.0px;top:432.88px;font-size:12.9px;color:#111;letter-spacing:-0.72px;-webkit-text-stroke:0.1px #111;">Pass</span>
</div></div>
<div id="frame"></div>
</body></html>
